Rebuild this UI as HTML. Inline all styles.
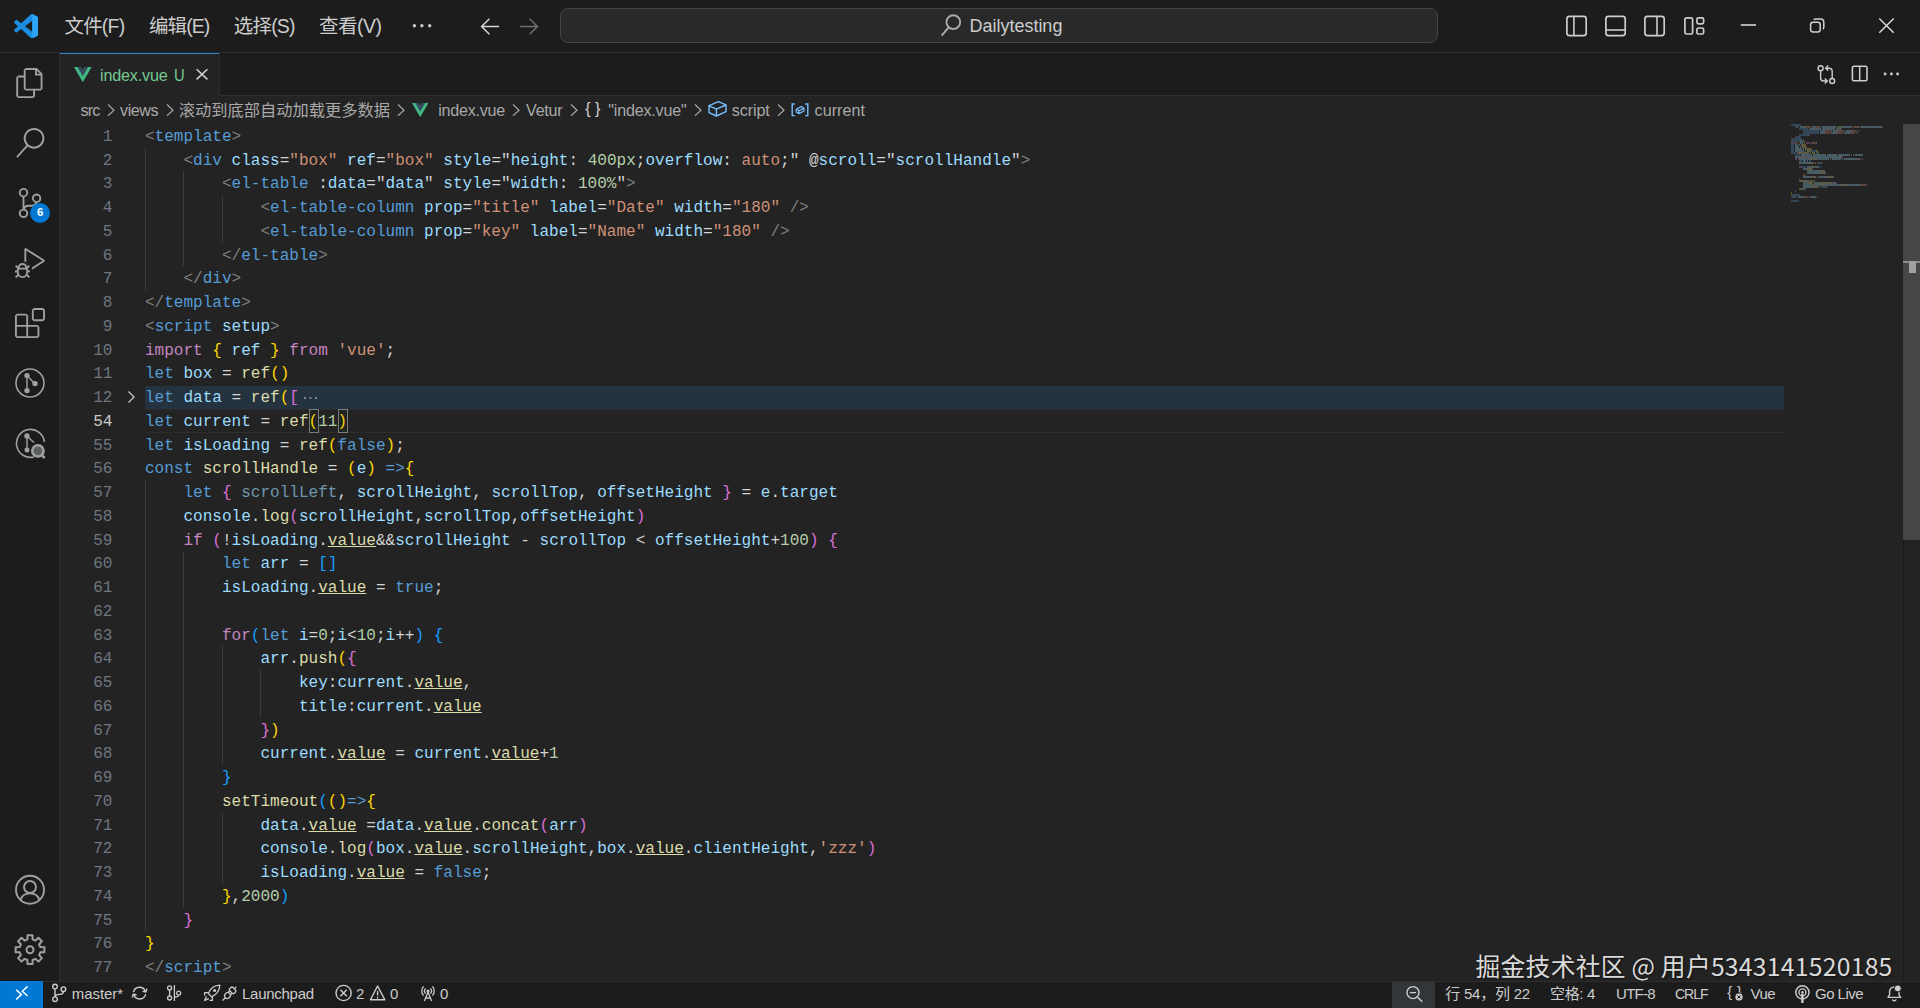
<!DOCTYPE html>
<html lang="zh-CN">
<head>
<meta charset="utf-8">
<title>index.vue - Dailytesting - Visual Studio Code</title>
<style>
html,body{margin:0;padding:0;}
body{width:1920px;height:1008px;overflow:hidden;background:#232323;position:relative;
 font-family:"Liberation Sans","Noto Sans CJK SC",sans-serif;color:#cccccc;}
div,span,svg{box-sizing:border-box;}
.abs{position:absolute;}
.fit{position:absolute;white-space:nowrap;display:inline-block;}
/* title bar */
#title{position:absolute;left:0;top:0;width:1920px;height:53px;background:#1c1c1c;border-bottom:1px solid #2e2e2e;}
#title .m{font-size:19.5px;line-height:24px;top:14px;color:#cccccc;}
#cc{position:absolute;left:560px;top:8px;width:878px;height:35px;border:1px solid #454545;border-radius:8px;background:#292929;}
/* activity bar */
#act{position:absolute;left:0;top:53px;width:60px;height:928px;background:#1c1c1c;border-right:1px solid #2e2e2e;}
/* tabs */
#tabs{position:absolute;left:60px;top:53px;width:1860px;height:43px;background:#1c1c1c;border-bottom:1px solid #2e2e2e;}
#tab{position:absolute;left:0;top:0;width:160px;height:43px;background:#232323;border-right:1px solid #2e2e2e;}
#tab:before{content:"";position:absolute;left:0;top:-1px;width:159px;height:2px;background:linear-gradient(#10304c 0,#10304c 50%,#3f7db3 50%,#3f7db3 100%);}
/* breadcrumbs */
#bc{position:absolute;left:60px;top:96px;width:1860px;height:27px;background:#232323;}
#bc .fit{font-size:16.1px;line-height:20px;top:3.6px;color:#a9a9a9;}
/* editor */
#ed{position:absolute;left:0;top:0;width:1920px;height:981px;overflow:hidden;pointer-events:none;}
.ln{position:absolute;left:60px;width:52.4px;text-align:right;font-family:"Liberation Mono",monospace;font-size:16.04px;line-height:23.75px;height:23.75px;color:#6e7681;white-space:pre;}
.ln.cur{color:#cccccc;}
.cl{position:absolute;left:145px;font-family:"Liberation Mono",monospace;font-size:16.04px;line-height:23.75px;height:23.75px;color:#d4d4d4;white-space:pre;}
.p{color:#808080}.t{color:#569cd6}.a{color:#9cdcfe}.s{color:#ce9178}.n{color:#b5cea8}
.k{color:#569cd6}.c{color:#c586c0}.f{color:#dcdcaa}.v{color:#9cdcfe}
.b1{color:#ffd700}.b2{color:#da70d6}.b3{color:#179fff}
.u{color:#dcdcaa;text-decoration:underline;text-underline-offset:0.8px;text-decoration-thickness:1.2px}
.dim{opacity:.62}
.fold{color:#8a8a8a;margin-left:6px;font-size:13px}
.bm{position:relative;display:inline-block;height:23.75px}
.bm:after{content:"";box-sizing:border-box;position:absolute;left:0.4px;right:-0.8px;top:-1.9px;height:23.75px;border:1px solid #7c7c7c;background:rgba(0,100,1,0.04)}
.guide{position:absolute;width:1px;background:#3a3a3a;}
.foldbg{position:absolute;left:145px;width:1639px;height:23.6px;background:#25323f;}
.folddots{position:absolute;width:1.8px;height:1.8px;background:#7d8791;box-shadow:5.5px 0 #7d8791,11px 0 #7d8791;}
.curline{position:absolute;left:145px;width:1639px;height:23.75px;border-top:1.5px solid #2d2d2d;border-bottom:1.5px solid #2d2d2d;}
.chev{position:absolute;left:123px;}
/* scrollbar */
#sb{position:absolute;left:1903px;top:124px;width:17px;height:857px;border-left:1.5px solid #191919;}
#sl{position:absolute;left:1903px;top:124px;width:17px;height:416px;background:#464646;}
/* status bar */
#st{position:absolute;left:0;top:981px;width:1920px;height:27px;background:#1c1c1c;border-top:1px solid #2e2e2e;}
#st .fit{font-size:15px;line-height:18px;top:2.5px;color:#cccccc;}
#wm{position:absolute;top:947px;font-family:"Noto Sans CJK SC","Liberation Sans",sans-serif;font-size:24.8px;line-height:36px;color:#dadada;white-space:nowrap;text-shadow:1px 1px 2px rgba(0,0,0,.6);}
</style>
</head>
<body>
<!-- TITLE BAR -->
<div id="title">
<span class="fit m" style="letter-spacing:-0.761px;left:64.4px">文件(F)</span>
<span class="fit m" style="letter-spacing:-0.920px;left:149px">编辑(E)</span>
<span class="fit m" style="letter-spacing:-0.820px;left:233.8px">选择(S)</span>
<span class="fit m" style="letter-spacing:-0.500px;left:319px">查看(V)</span>
<div id="cc"></div>
<span class="fit" style="letter-spacing:-0.004px;left:969.4px;top:14.8px;font-size:18px;line-height:22px;color:#cccccc">Dailytesting</span>
</div>

<!-- ACTIVITY BAR -->
<div id="act">
</div>

<!-- TABS -->
<div id="tabs">
<div id="tab"></div>
<span class="fit" style="letter-spacing:-0.200px;left:40px;top:12px;font-size:16.2px;line-height:20px;color:#73c991">index.vue</span>
<span class="fit" style="left:113.6px;top:12px;font-size:16.4px;line-height:20px;color:#73c991;transform:scaleX(.9);transform-origin:left center">U</span>
</div>

<!-- BREADCRUMBS -->
<div id="bc">
<span class="fit" style="letter-spacing:-0.818px;left:20.5px">src</span>
<span class="fit" style="letter-spacing:-0.410px;left:60px">views</span>
<span class="fit" style="letter-spacing:-0.004px;left:118.8px;font-size:16.25px">滚动到底部自动加载更多数据</span>
<span class="fit" style="letter-spacing:-0.234px;left:378.2px">index.vue</span>
<span class="fit" style="letter-spacing:-0.216px;left:466px">Vetur</span>
<span class="fit" style="letter-spacing:-0.193px;left:548.3px">"index.vue"</span>
<span class="fit" style="letter-spacing:-0.059px;left:671.7px">script</span>
<span class="fit" style="letter-spacing:0.044px;left:754.6px">current</span>
</div>

<!-- EDITOR -->
<div id="ed">
<div class="guide" style="left:145.00px;top:147.50px;height:142.50px"></div>
<div class="guide" style="left:183.00px;top:171.25px;height:95.00px"></div>
<div class="guide" style="left:222.00px;top:195.00px;height:47.50px"></div>
<div class="guide" style="left:145.00px;top:480.00px;height:451.25px"></div>
<div class="guide" style="left:183.00px;top:551.25px;height:356.25px"></div>
<div class="guide" style="left:222.00px;top:646.25px;height:118.75px"></div>
<div class="guide" style="left:260.00px;top:670.00px;height:47.50px"></div>
<div class="guide" style="left:222.00px;top:812.50px;height:71.25px"></div>
<div class="ln" style="top:125.90px">1</div><div class="cl" style="top:125.90px"><span class="p">&lt;</span><span class="t">template</span><span class="p">&gt;</span></div>
<div class="ln" style="top:149.65px">2</div><div class="cl" style="top:149.65px">    <span class="p">&lt;</span><span class="t">div</span> <span class="a">class</span>=<span class="s">"box"</span> <span class="a">ref</span>=<span class="s">"box"</span> <span class="a">style</span>="<span class="a">height</span>: <span class="n">400px</span>;<span class="a">overflow</span>: <span class="s">auto</span>;" @<span class="a">scroll</span>="<span class="a">scrollHandle</span>"<span class="p">&gt;</span></div>
<div class="ln" style="top:173.40px">3</div><div class="cl" style="top:173.40px">        <span class="p">&lt;</span><span class="t">el-table</span> :<span class="a">data</span>="<span class="a">data</span>" <span class="a">style</span>="<span class="a">width</span>: <span class="n">100%</span>"<span class="p">&gt;</span></div>
<div class="ln" style="top:197.15px">4</div><div class="cl" style="top:197.15px">            <span class="p">&lt;</span><span class="t">el-table-column</span> <span class="a">prop</span>=<span class="s">"title"</span> <span class="a">label</span>=<span class="s">"Date"</span> <span class="a">width</span>=<span class="s">"180"</span> <span class="p">/&gt;</span></div>
<div class="ln" style="top:220.90px">5</div><div class="cl" style="top:220.90px">            <span class="p">&lt;</span><span class="t">el-table-column</span> <span class="a">prop</span>=<span class="s">"key"</span> <span class="a">label</span>=<span class="s">"Name"</span> <span class="a">width</span>=<span class="s">"180"</span> <span class="p">/&gt;</span></div>
<div class="ln" style="top:244.65px">6</div><div class="cl" style="top:244.65px">        <span class="p">&lt;/</span><span class="t">el-table</span><span class="p">&gt;</span></div>
<div class="ln" style="top:268.40px">7</div><div class="cl" style="top:268.40px">    <span class="p">&lt;/</span><span class="t">div</span><span class="p">&gt;</span></div>
<div class="ln" style="top:292.15px">8</div><div class="cl" style="top:292.15px"><span class="p">&lt;/</span><span class="t">template</span><span class="p">&gt;</span></div>
<div class="ln" style="top:315.90px">9</div><div class="cl" style="top:315.90px"><span class="p">&lt;</span><span class="t">script</span> <span class="a">setup</span><span class="p">&gt;</span></div>
<div class="ln" style="top:339.65px">10</div><div class="cl" style="top:339.65px"><span class="c">import</span> <span class="b1">{</span> <span class="v">ref</span> <span class="b1">}</span> <span class="c">from</span> <span class="s">'vue'</span>;</div>
<div class="ln" style="top:363.40px">11</div><div class="cl" style="top:363.40px"><span class="k">let</span> <span class="v">box</span> = <span class="f">ref</span><span class="b1">()</span></div>
<div class="foldbg" style="top:386.20px"></div><div class="folddots" style="left:304.2px;top:397.20px"></div><svg class="chev" style="top:389.20px" width="16" height="16" viewBox="0 0 16 16"><path d="M5.5 2.5 L11 8 L5.5 13.5" fill="none" stroke="#c5c5c5" stroke-width="1.3"/></svg><div class="ln" style="top:387.15px">12</div><div class="cl" style="top:387.15px"><span class="k">let</span> <span class="v">data</span> = <span class="f">ref</span><span class="b1">(</span><span class="b2">[</span></div>
<div class="curline" style="top:408.75px"></div><div class="ln cur" style="top:410.90px">54</div><div class="cl" style="top:410.90px"><span class="k">let</span> <span class="v">current</span> = <span class="f">ref</span><span class="b1 bm">(</span><span class="n">11</span><span class="b1 bm">)</span></div>
<div class="ln" style="top:434.65px">55</div><div class="cl" style="top:434.65px"><span class="k">let</span> <span class="v">isLoading</span> = <span class="f">ref</span><span class="b1">(</span><span class="k">false</span><span class="b1">)</span>;</div>
<div class="ln" style="top:458.40px">56</div><div class="cl" style="top:458.40px"><span class="k">const</span> <span class="f">scrollHandle</span> = <span class="b1">(</span><span class="v">e</span><span class="b1">)</span> <span class="k">=&gt;</span><span class="b1">{</span></div>
<div class="ln" style="top:482.15px">57</div><div class="cl" style="top:482.15px">    <span class="k">let</span> <span class="b2">{</span> <span class="v dim">scrollLeft</span>, <span class="v">scrollHeight</span>, <span class="v">scrollTop</span>, <span class="v">offsetHeight</span> <span class="b2">}</span> = <span class="v">e</span>.<span class="v">target</span></div>
<div class="ln" style="top:505.90px">58</div><div class="cl" style="top:505.90px">    <span class="v">console</span>.<span class="f">log</span><span class="b2">(</span><span class="v">scrollHeight</span>,<span class="v">scrollTop</span>,<span class="v">offsetHeight</span><span class="b2">)</span></div>
<div class="ln" style="top:529.65px">59</div><div class="cl" style="top:529.65px">    <span class="c">if</span> <span class="b2">(</span>!<span class="v">isLoading</span>.<span class="u">value</span>&amp;&amp;<span class="v">scrollHeight</span> - <span class="v">scrollTop</span> &lt; <span class="v">offsetHeight</span>+<span class="n">100</span><span class="b2">)</span> <span class="b2">{</span></div>
<div class="ln" style="top:553.40px">60</div><div class="cl" style="top:553.40px">        <span class="k">let</span> <span class="v">arr</span> = <span class="b3">[]</span></div>
<div class="ln" style="top:577.15px">61</div><div class="cl" style="top:577.15px">        <span class="v">isLoading</span>.<span class="u">value</span> = <span class="k">true</span>;</div>
<div class="ln" style="top:600.90px">62</div><div class="cl" style="top:600.90px"></div>
<div class="ln" style="top:624.65px">63</div><div class="cl" style="top:624.65px">        <span class="c">for</span><span class="b3">(</span><span class="k">let</span> <span class="v">i</span>=<span class="n">0</span>;<span class="v">i</span>&lt;<span class="n">10</span>;<span class="v">i</span>++<span class="b3">)</span> <span class="b3">{</span></div>
<div class="ln" style="top:648.40px">64</div><div class="cl" style="top:648.40px">            <span class="v">arr</span>.<span class="f">push</span><span class="b1">(</span><span class="b2">{</span></div>
<div class="ln" style="top:672.15px">65</div><div class="cl" style="top:672.15px">                <span class="v">key</span>:<span class="v">current</span>.<span class="u">value</span>,</div>
<div class="ln" style="top:695.90px">66</div><div class="cl" style="top:695.90px">                <span class="v">title</span>:<span class="v">current</span>.<span class="u">value</span></div>
<div class="ln" style="top:719.65px">67</div><div class="cl" style="top:719.65px">            <span class="b2">}</span><span class="b1">)</span></div>
<div class="ln" style="top:743.40px">68</div><div class="cl" style="top:743.40px">            <span class="v">current</span>.<span class="u">value</span> = <span class="v">current</span>.<span class="u">value</span>+<span class="n">1</span></div>
<div class="ln" style="top:767.15px">69</div><div class="cl" style="top:767.15px">        <span class="b3">}</span></div>
<div class="ln" style="top:790.90px">70</div><div class="cl" style="top:790.90px">        <span class="f">setTimeout</span><span class="b3">(</span><span class="b1">()</span><span class="k">=&gt;</span><span class="b1">{</span></div>
<div class="ln" style="top:814.65px">71</div><div class="cl" style="top:814.65px">            <span class="v">data</span>.<span class="u">value</span> =<span class="v">data</span>.<span class="u">value</span>.<span class="f">concat</span><span class="b2">(</span><span class="v">arr</span><span class="b2">)</span></div>
<div class="ln" style="top:838.40px">72</div><div class="cl" style="top:838.40px">            <span class="v">console</span>.<span class="f">log</span><span class="b2">(</span><span class="v">box</span>.<span class="u">value</span>.<span class="v">scrollHeight</span>,<span class="v">box</span>.<span class="u">value</span>.<span class="v">clientHeight</span>,<span class="s">'zzz'</span><span class="b2">)</span></div>
<div class="ln" style="top:862.15px">73</div><div class="cl" style="top:862.15px">            <span class="v">isLoading</span>.<span class="u">value</span> = <span class="k">false</span>;</div>
<div class="ln" style="top:885.90px">74</div><div class="cl" style="top:885.90px">        <span class="b1">}</span>,<span class="n">2000</span><span class="b3">)</span></div>
<div class="ln" style="top:909.65px">75</div><div class="cl" style="top:909.65px">    <span class="b2">}</span></div>
<div class="ln" style="top:933.40px">76</div><div class="cl" style="top:933.40px"><span class="b1">}</span></div>
<div class="ln" style="top:957.15px">77</div><div class="cl" style="top:957.15px"><span class="p">&lt;/</span><span class="t">script</span><span class="p">&gt;</span></div>
<svg class="abs" style="left:1791px;top:124px;opacity:.3" width="100" height="80" viewBox="0 0 100 80" shape-rendering="crispEdges"><rect x="0" y="0" width="1" height="2" fill="#808080"/><rect x="1" y="0" width="8" height="2" fill="#569cd6"/><rect x="9" y="0" width="1" height="2" fill="#808080"/><rect x="4" y="2" width="1" height="2" fill="#808080"/><rect x="5" y="2" width="3" height="2" fill="#569cd6"/><rect x="9" y="2" width="5" height="2" fill="#9cdcfe"/><rect x="14" y="2" width="1" height="2" fill="#d4d4d4"/><rect x="15" y="2" width="5" height="2" fill="#ce9178"/><rect x="21" y="2" width="3" height="2" fill="#9cdcfe"/><rect x="24" y="2" width="1" height="2" fill="#d4d4d4"/><rect x="25" y="2" width="5" height="2" fill="#ce9178"/><rect x="31" y="2" width="5" height="2" fill="#9cdcfe"/><rect x="36" y="2" width="2" height="2" fill="#d4d4d4"/><rect x="38" y="2" width="6" height="2" fill="#9cdcfe"/><rect x="44" y="2" width="1" height="2" fill="#d4d4d4"/><rect x="46" y="2" width="5" height="2" fill="#b5cea8"/><rect x="51" y="2" width="1" height="2" fill="#d4d4d4"/><rect x="52" y="2" width="8" height="2" fill="#9cdcfe"/><rect x="60" y="2" width="1" height="2" fill="#d4d4d4"/><rect x="62" y="2" width="4" height="2" fill="#ce9178"/><rect x="66" y="2" width="2" height="2" fill="#d4d4d4"/><rect x="69" y="2" width="1" height="2" fill="#d4d4d4"/><rect x="70" y="2" width="6" height="2" fill="#9cdcfe"/><rect x="76" y="2" width="2" height="2" fill="#d4d4d4"/><rect x="78" y="2" width="12" height="2" fill="#9cdcfe"/><rect x="90" y="2" width="1" height="2" fill="#d4d4d4"/><rect x="91" y="2" width="1" height="2" fill="#808080"/><rect x="8" y="4" width="1" height="2" fill="#808080"/><rect x="9" y="4" width="8" height="2" fill="#569cd6"/><rect x="18" y="4" width="1" height="2" fill="#d4d4d4"/><rect x="19" y="4" width="4" height="2" fill="#9cdcfe"/><rect x="23" y="4" width="2" height="2" fill="#d4d4d4"/><rect x="25" y="4" width="4" height="2" fill="#9cdcfe"/><rect x="29" y="4" width="1" height="2" fill="#d4d4d4"/><rect x="31" y="4" width="5" height="2" fill="#9cdcfe"/><rect x="36" y="4" width="2" height="2" fill="#d4d4d4"/><rect x="38" y="4" width="5" height="2" fill="#9cdcfe"/><rect x="43" y="4" width="1" height="2" fill="#d4d4d4"/><rect x="45" y="4" width="4" height="2" fill="#b5cea8"/><rect x="49" y="4" width="1" height="2" fill="#d4d4d4"/><rect x="50" y="4" width="1" height="2" fill="#808080"/><rect x="12" y="6" width="1" height="2" fill="#808080"/><rect x="13" y="6" width="15" height="2" fill="#569cd6"/><rect x="29" y="6" width="4" height="2" fill="#9cdcfe"/><rect x="33" y="6" width="1" height="2" fill="#d4d4d4"/><rect x="34" y="6" width="7" height="2" fill="#ce9178"/><rect x="42" y="6" width="5" height="2" fill="#9cdcfe"/><rect x="47" y="6" width="1" height="2" fill="#d4d4d4"/><rect x="48" y="6" width="6" height="2" fill="#ce9178"/><rect x="55" y="6" width="5" height="2" fill="#9cdcfe"/><rect x="60" y="6" width="1" height="2" fill="#d4d4d4"/><rect x="61" y="6" width="5" height="2" fill="#ce9178"/><rect x="67" y="6" width="2" height="2" fill="#808080"/><rect x="12" y="8" width="1" height="2" fill="#808080"/><rect x="13" y="8" width="15" height="2" fill="#569cd6"/><rect x="29" y="8" width="4" height="2" fill="#9cdcfe"/><rect x="33" y="8" width="1" height="2" fill="#d4d4d4"/><rect x="34" y="8" width="5" height="2" fill="#ce9178"/><rect x="40" y="8" width="5" height="2" fill="#9cdcfe"/><rect x="45" y="8" width="1" height="2" fill="#d4d4d4"/><rect x="46" y="8" width="6" height="2" fill="#ce9178"/><rect x="53" y="8" width="5" height="2" fill="#9cdcfe"/><rect x="58" y="8" width="1" height="2" fill="#d4d4d4"/><rect x="59" y="8" width="5" height="2" fill="#ce9178"/><rect x="65" y="8" width="2" height="2" fill="#808080"/><rect x="8" y="10" width="2" height="2" fill="#808080"/><rect x="10" y="10" width="8" height="2" fill="#569cd6"/><rect x="18" y="10" width="1" height="2" fill="#808080"/><rect x="4" y="12" width="2" height="2" fill="#808080"/><rect x="6" y="12" width="3" height="2" fill="#569cd6"/><rect x="9" y="12" width="1" height="2" fill="#808080"/><rect x="0" y="14" width="2" height="2" fill="#808080"/><rect x="2" y="14" width="8" height="2" fill="#569cd6"/><rect x="10" y="14" width="1" height="2" fill="#808080"/><rect x="0" y="16" width="1" height="2" fill="#808080"/><rect x="1" y="16" width="6" height="2" fill="#569cd6"/><rect x="8" y="16" width="5" height="2" fill="#9cdcfe"/><rect x="13" y="16" width="1" height="2" fill="#808080"/><rect x="0" y="18" width="6" height="2" fill="#c586c0"/><rect x="7" y="18" width="1" height="2" fill="#ffd700"/><rect x="9" y="18" width="3" height="2" fill="#9cdcfe"/><rect x="13" y="18" width="1" height="2" fill="#ffd700"/><rect x="15" y="18" width="4" height="2" fill="#c586c0"/><rect x="20" y="18" width="5" height="2" fill="#ce9178"/><rect x="25" y="18" width="1" height="2" fill="#d4d4d4"/><rect x="0" y="20" width="3" height="2" fill="#569cd6"/><rect x="4" y="20" width="3" height="2" fill="#9cdcfe"/><rect x="8" y="20" width="1" height="2" fill="#d4d4d4"/><rect x="10" y="20" width="3" height="2" fill="#dcdcaa"/><rect x="13" y="20" width="2" height="2" fill="#ffd700"/><rect x="0" y="22" width="3" height="2" fill="#569cd6"/><rect x="4" y="22" width="4" height="2" fill="#9cdcfe"/><rect x="9" y="22" width="1" height="2" fill="#d4d4d4"/><rect x="11" y="22" width="3" height="2" fill="#dcdcaa"/><rect x="14" y="22" width="1" height="2" fill="#ffd700"/><rect x="15" y="22" width="1" height="2" fill="#da70d6"/><rect x="0" y="24" width="3" height="2" fill="#569cd6"/><rect x="4" y="24" width="7" height="2" fill="#9cdcfe"/><rect x="12" y="24" width="1" height="2" fill="#d4d4d4"/><rect x="14" y="24" width="3" height="2" fill="#dcdcaa"/><rect x="17" y="24" width="1" height="2" fill="#ffd700"/><rect x="18" y="24" width="2" height="2" fill="#b5cea8"/><rect x="20" y="24" width="1" height="2" fill="#ffd700"/><rect x="0" y="26" width="3" height="2" fill="#569cd6"/><rect x="4" y="26" width="9" height="2" fill="#9cdcfe"/><rect x="14" y="26" width="1" height="2" fill="#d4d4d4"/><rect x="16" y="26" width="3" height="2" fill="#dcdcaa"/><rect x="19" y="26" width="1" height="2" fill="#ffd700"/><rect x="20" y="26" width="5" height="2" fill="#569cd6"/><rect x="25" y="26" width="1" height="2" fill="#ffd700"/><rect x="26" y="26" width="1" height="2" fill="#d4d4d4"/><rect x="0" y="28" width="5" height="2" fill="#569cd6"/><rect x="6" y="28" width="12" height="2" fill="#dcdcaa"/><rect x="19" y="28" width="1" height="2" fill="#d4d4d4"/><rect x="21" y="28" width="1" height="2" fill="#ffd700"/><rect x="22" y="28" width="1" height="2" fill="#9cdcfe"/><rect x="23" y="28" width="1" height="2" fill="#ffd700"/><rect x="25" y="28" width="2" height="2" fill="#569cd6"/><rect x="27" y="28" width="1" height="2" fill="#ffd700"/><rect x="4" y="30" width="3" height="2" fill="#569cd6"/><rect x="8" y="30" width="1" height="2" fill="#da70d6"/><rect x="10" y="30" width="10" height="2" fill="#9cdcfe"/><rect x="20" y="30" width="1" height="2" fill="#d4d4d4"/><rect x="22" y="30" width="12" height="2" fill="#9cdcfe"/><rect x="34" y="30" width="1" height="2" fill="#d4d4d4"/><rect x="36" y="30" width="9" height="2" fill="#9cdcfe"/><rect x="45" y="30" width="1" height="2" fill="#d4d4d4"/><rect x="47" y="30" width="12" height="2" fill="#9cdcfe"/><rect x="60" y="30" width="1" height="2" fill="#da70d6"/><rect x="62" y="30" width="1" height="2" fill="#d4d4d4"/><rect x="64" y="30" width="1" height="2" fill="#9cdcfe"/><rect x="65" y="30" width="1" height="2" fill="#d4d4d4"/><rect x="66" y="30" width="6" height="2" fill="#9cdcfe"/><rect x="4" y="32" width="7" height="2" fill="#9cdcfe"/><rect x="11" y="32" width="1" height="2" fill="#d4d4d4"/><rect x="12" y="32" width="3" height="2" fill="#dcdcaa"/><rect x="15" y="32" width="1" height="2" fill="#da70d6"/><rect x="16" y="32" width="12" height="2" fill="#9cdcfe"/><rect x="28" y="32" width="1" height="2" fill="#d4d4d4"/><rect x="29" y="32" width="9" height="2" fill="#9cdcfe"/><rect x="38" y="32" width="1" height="2" fill="#d4d4d4"/><rect x="39" y="32" width="12" height="2" fill="#9cdcfe"/><rect x="51" y="32" width="1" height="2" fill="#da70d6"/><rect x="4" y="34" width="2" height="2" fill="#c586c0"/><rect x="7" y="34" width="1" height="2" fill="#da70d6"/><rect x="8" y="34" width="1" height="2" fill="#d4d4d4"/><rect x="9" y="34" width="9" height="2" fill="#9cdcfe"/><rect x="18" y="34" width="1" height="2" fill="#d4d4d4"/><rect x="19" y="34" width="5" height="2" fill="#dcdcaa"/><rect x="24" y="34" width="2" height="2" fill="#d4d4d4"/><rect x="26" y="34" width="12" height="2" fill="#9cdcfe"/><rect x="39" y="34" width="1" height="2" fill="#d4d4d4"/><rect x="41" y="34" width="9" height="2" fill="#9cdcfe"/><rect x="51" y="34" width="1" height="2" fill="#d4d4d4"/><rect x="53" y="34" width="12" height="2" fill="#9cdcfe"/><rect x="65" y="34" width="1" height="2" fill="#d4d4d4"/><rect x="66" y="34" width="3" height="2" fill="#b5cea8"/><rect x="69" y="34" width="1" height="2" fill="#da70d6"/><rect x="71" y="34" width="1" height="2" fill="#da70d6"/><rect x="8" y="36" width="3" height="2" fill="#569cd6"/><rect x="12" y="36" width="3" height="2" fill="#9cdcfe"/><rect x="16" y="36" width="1" height="2" fill="#d4d4d4"/><rect x="18" y="36" width="2" height="2" fill="#179fff"/><rect x="8" y="38" width="9" height="2" fill="#9cdcfe"/><rect x="17" y="38" width="1" height="2" fill="#d4d4d4"/><rect x="18" y="38" width="5" height="2" fill="#dcdcaa"/><rect x="24" y="38" width="1" height="2" fill="#d4d4d4"/><rect x="26" y="38" width="4" height="2" fill="#569cd6"/><rect x="30" y="38" width="1" height="2" fill="#d4d4d4"/><rect x="8" y="42" width="3" height="2" fill="#c586c0"/><rect x="11" y="42" width="1" height="2" fill="#179fff"/><rect x="12" y="42" width="3" height="2" fill="#569cd6"/><rect x="16" y="42" width="1" height="2" fill="#9cdcfe"/><rect x="17" y="42" width="1" height="2" fill="#d4d4d4"/><rect x="18" y="42" width="1" height="2" fill="#b5cea8"/><rect x="19" y="42" width="1" height="2" fill="#d4d4d4"/><rect x="20" y="42" width="1" height="2" fill="#9cdcfe"/><rect x="21" y="42" width="1" height="2" fill="#d4d4d4"/><rect x="22" y="42" width="2" height="2" fill="#b5cea8"/><rect x="24" y="42" width="1" height="2" fill="#d4d4d4"/><rect x="25" y="42" width="1" height="2" fill="#9cdcfe"/><rect x="26" y="42" width="2" height="2" fill="#d4d4d4"/><rect x="28" y="42" width="1" height="2" fill="#179fff"/><rect x="30" y="42" width="1" height="2" fill="#179fff"/><rect x="12" y="44" width="3" height="2" fill="#9cdcfe"/><rect x="15" y="44" width="1" height="2" fill="#d4d4d4"/><rect x="16" y="44" width="4" height="2" fill="#dcdcaa"/><rect x="20" y="44" width="1" height="2" fill="#ffd700"/><rect x="21" y="44" width="1" height="2" fill="#da70d6"/><rect x="16" y="46" width="3" height="2" fill="#9cdcfe"/><rect x="19" y="46" width="1" height="2" fill="#d4d4d4"/><rect x="20" y="46" width="7" height="2" fill="#9cdcfe"/><rect x="27" y="46" width="1" height="2" fill="#d4d4d4"/><rect x="28" y="46" width="5" height="2" fill="#dcdcaa"/><rect x="33" y="46" width="1" height="2" fill="#d4d4d4"/><rect x="16" y="48" width="5" height="2" fill="#9cdcfe"/><rect x="21" y="48" width="1" height="2" fill="#d4d4d4"/><rect x="22" y="48" width="7" height="2" fill="#9cdcfe"/><rect x="29" y="48" width="1" height="2" fill="#d4d4d4"/><rect x="30" y="48" width="5" height="2" fill="#dcdcaa"/><rect x="12" y="50" width="1" height="2" fill="#da70d6"/><rect x="13" y="50" width="1" height="2" fill="#ffd700"/><rect x="12" y="52" width="7" height="2" fill="#9cdcfe"/><rect x="19" y="52" width="1" height="2" fill="#d4d4d4"/><rect x="20" y="52" width="5" height="2" fill="#dcdcaa"/><rect x="26" y="52" width="1" height="2" fill="#d4d4d4"/><rect x="28" y="52" width="7" height="2" fill="#9cdcfe"/><rect x="35" y="52" width="1" height="2" fill="#d4d4d4"/><rect x="36" y="52" width="5" height="2" fill="#dcdcaa"/><rect x="41" y="52" width="1" height="2" fill="#d4d4d4"/><rect x="42" y="52" width="1" height="2" fill="#b5cea8"/><rect x="8" y="54" width="1" height="2" fill="#179fff"/><rect x="8" y="56" width="10" height="2" fill="#dcdcaa"/><rect x="18" y="56" width="1" height="2" fill="#179fff"/><rect x="19" y="56" width="2" height="2" fill="#ffd700"/><rect x="21" y="56" width="2" height="2" fill="#569cd6"/><rect x="23" y="56" width="1" height="2" fill="#ffd700"/><rect x="12" y="58" width="4" height="2" fill="#9cdcfe"/><rect x="16" y="58" width="1" height="2" fill="#d4d4d4"/><rect x="17" y="58" width="5" height="2" fill="#dcdcaa"/><rect x="23" y="58" width="1" height="2" fill="#d4d4d4"/><rect x="24" y="58" width="4" height="2" fill="#9cdcfe"/><rect x="28" y="58" width="1" height="2" fill="#d4d4d4"/><rect x="29" y="58" width="5" height="2" fill="#dcdcaa"/><rect x="34" y="58" width="1" height="2" fill="#d4d4d4"/><rect x="35" y="58" width="6" height="2" fill="#dcdcaa"/><rect x="41" y="58" width="1" height="2" fill="#da70d6"/><rect x="42" y="58" width="3" height="2" fill="#9cdcfe"/><rect x="45" y="58" width="1" height="2" fill="#da70d6"/><rect x="12" y="60" width="7" height="2" fill="#9cdcfe"/><rect x="19" y="60" width="1" height="2" fill="#d4d4d4"/><rect x="20" y="60" width="3" height="2" fill="#dcdcaa"/><rect x="23" y="60" width="1" height="2" fill="#da70d6"/><rect x="24" y="60" width="3" height="2" fill="#9cdcfe"/><rect x="27" y="60" width="1" height="2" fill="#d4d4d4"/><rect x="28" y="60" width="5" height="2" fill="#dcdcaa"/><rect x="33" y="60" width="1" height="2" fill="#d4d4d4"/><rect x="34" y="60" width="12" height="2" fill="#9cdcfe"/><rect x="46" y="60" width="1" height="2" fill="#d4d4d4"/><rect x="47" y="60" width="3" height="2" fill="#9cdcfe"/><rect x="50" y="60" width="1" height="2" fill="#d4d4d4"/><rect x="51" y="60" width="5" height="2" fill="#dcdcaa"/><rect x="56" y="60" width="1" height="2" fill="#d4d4d4"/><rect x="57" y="60" width="12" height="2" fill="#9cdcfe"/><rect x="69" y="60" width="1" height="2" fill="#d4d4d4"/><rect x="70" y="60" width="5" height="2" fill="#ce9178"/><rect x="75" y="60" width="1" height="2" fill="#da70d6"/><rect x="12" y="62" width="9" height="2" fill="#9cdcfe"/><rect x="21" y="62" width="1" height="2" fill="#d4d4d4"/><rect x="22" y="62" width="5" height="2" fill="#dcdcaa"/><rect x="28" y="62" width="1" height="2" fill="#d4d4d4"/><rect x="30" y="62" width="5" height="2" fill="#569cd6"/><rect x="35" y="62" width="1" height="2" fill="#d4d4d4"/><rect x="8" y="64" width="1" height="2" fill="#ffd700"/><rect x="9" y="64" width="1" height="2" fill="#d4d4d4"/><rect x="10" y="64" width="4" height="2" fill="#b5cea8"/><rect x="14" y="64" width="1" height="2" fill="#179fff"/><rect x="4" y="66" width="1" height="2" fill="#da70d6"/><rect x="0" y="68" width="1" height="2" fill="#ffd700"/><rect x="0" y="70" width="2" height="2" fill="#808080"/><rect x="2" y="70" width="6" height="2" fill="#569cd6"/><rect x="8" y="70" width="1" height="2" fill="#808080"/><rect x="0" y="72" width="1" height="2" fill="#808080"/><rect x="1" y="72" width="5" height="2" fill="#569cd6"/><rect x="7" y="72" width="4" height="2" fill="#9cdcfe"/><rect x="11" y="72" width="1" height="2" fill="#d4d4d4"/><rect x="12" y="72" width="6" height="2" fill="#ce9178"/><rect x="19" y="72" width="6" height="2" fill="#9cdcfe"/><rect x="25" y="72" width="1" height="2" fill="#808080"/><rect x="0" y="76" width="2" height="2" fill="#808080"/><rect x="2" y="76" width="5" height="2" fill="#569cd6"/><rect x="7" y="76" width="1" height="2" fill="#808080"/></svg>
</div>
<div id="sb"></div>
<div id="sl"></div>
<div class="abs" style="left:1903px;top:261px;width:17px;height:2px;background:#8a8a8a"></div>
<div class="abs" style="left:1909px;top:261px;width:7px;height:12px;background:#a0a0a0"></div>

<div id="wm" style="letter-spacing:0.214px;left:1475.6px">掘金技术社区 @ 用户5343141520185</div>

<!-- STATUS BAR -->
<div id="st">
<div class="abs" style="left:0;top:-1px;width:43px;height:28px;background:#0078d4"></div>
<span class="fit" style="letter-spacing:-0.070px;left:71.8px">master*</span>
<span class="fit" style="letter-spacing:-0.272px;left:242px">Launchpad</span>
<span class="fit" style="letter-spacing:-1.344px;left:356px">2</span>
<span class="fit" style="letter-spacing:-0.844px;left:390px">0</span>
<span class="fit" style="letter-spacing:-0.844px;left:440px">0</span>
<div class="abs" style="left:1392px;top:0;width:43px;height:27px;background:#333638"></div>
<span class="fit" style="letter-spacing:-0.213px;left:1445.2px">行 54，列 22</span>
<span class="fit" style="letter-spacing:-0.338px;left:1550px">空格: 4</span>
<span class="fit" style="letter-spacing:-0.700px;left:1616px">UTF-8</span>
<span class="fit" style="letter-spacing:-0.991px;left:1675px;font-size:14px">CRLF</span>
<span class="fit" style="letter-spacing:-0.580px;left:1750.6px">Vue</span>
<span class="fit" style="letter-spacing:-0.529px;left:1815px">Go Live</span>
</div>
<svg class="abs" style="left:13.70px;top:13.70px" width="24.4" height="24.4" viewBox="0 0 100 100" ><defs><clipPath id="lg"><path d="M70.9119 99.3171C72.4869 99.9307 74.2828 99.8914 75.8725 99.1264L96.4608 89.2197C98.6242 88.1787 100 85.9892 100 83.5872V16.4133C100 14.0113 98.6243 11.8218 96.4609 10.7808L75.8725 0.873756C73.7862 -0.130129 71.3446 0.11576 69.5135 1.44695C69.252 1.63711 69.0028 1.84943 68.769 2.08341L29.3551 38.0415L12.1872 25.0096C10.589 23.7965 8.35363 23.8959 6.86933 25.2461L1.36303 30.2549C-0.452552 31.9064 -0.454633 34.7627 1.35853 36.417L16.2471 50.0001L1.35853 63.5832C-0.454633 65.2374 -0.452552 68.0938 1.36303 69.7453L6.86933 74.7541C8.35363 76.1043 10.589 76.2037 12.1872 74.9905L29.3551 61.9587L68.769 97.9167C69.3925 98.5406 70.1246 99.0104 70.9119 99.3171ZM75.0152 27.2989L45.1091 50.0001L75.0152 72.7012V27.2989Z"/></clipPath></defs><path d="M70.9119 99.3171C72.4869 99.9307 74.2828 99.8914 75.8725 99.1264L96.4608 89.2197C98.6242 88.1787 100 85.9892 100 83.5872V16.4133C100 14.0113 98.6243 11.8218 96.4609 10.7808L75.8725 0.873756C73.7862 -0.130129 71.3446 0.11576 69.5135 1.44695C69.252 1.63711 69.0028 1.84943 68.769 2.08341L29.3551 38.0415L12.1872 25.0096C10.589 23.7965 8.35363 23.8959 6.86933 25.2461L1.36303 30.2549C-0.452552 31.9064 -0.454633 34.7627 1.35853 36.417L16.2471 50.0001L1.35853 63.5832C-0.454633 65.2374 -0.452552 68.0938 1.36303 69.7453L6.86933 74.7541C8.35363 76.1043 10.589 76.2037 12.1872 74.9905L29.3551 61.9587L68.769 97.9167C69.3925 98.5406 70.1246 99.0104 70.9119 99.3171ZM75.0152 27.2989L45.1091 50.0001L75.0152 72.7012V27.2989Z" fill="#1b8de0" fill-rule="evenodd"/><rect x="75" y="0" width="25" height="100" fill="#2ba6f5" clip-path="url(#lg)"/></svg>
<svg class="abs" style="left:410.00px;top:20.00px" width="26" height="12" viewBox="0 0 26 12" ><circle cx="4.4" cy="5.8" r="1.7" fill="#ccc"/><circle cx="11.9" cy="5.8" r="1.7" fill="#ccc"/><circle cx="19.7" cy="5.8" r="1.7" fill="#ccc"/></svg>
<svg class="abs" style="left:478.00px;top:16.00px" width="24" height="22" viewBox="0 0 24 22" ><path d="M21 10.5H3.6M11.4 2.8L3.6 10.5L11.4 18.2" fill="none" stroke="#d6d6d6" stroke-width="1.5"/></svg>
<svg class="abs" style="left:517.00px;top:16.00px" width="24" height="22" viewBox="0 0 24 22" ><path d="M3 10.5H20.4M12.6 2.8L20.4 10.5L12.6 18.2" fill="none" stroke="#6f6f6f" stroke-width="1.5"/></svg>
<svg class="abs" style="left:938.00px;top:12.00px" width="28" height="28" viewBox="0 0 28 28" ><circle cx="15.3" cy="10.1" r="6.9" fill="none" stroke="#a8a8a8" stroke-width="1.9"/><path d="M10.7 15.4L3.6 23.6" stroke="#a8a8a8" stroke-width="2" fill="none"/></svg>
<svg class="abs" style="left:1564.00px;top:14.00px" width="24" height="24" viewBox="0 0 24 24" ><rect x="2.9" y="2.3" width="19.3" height="19.3" rx="2.6" fill="none" stroke="#cccccc" stroke-width="1.7"/><path d="M9.9 2.3V21.6" stroke="#cccccc" stroke-width="1.6"/></svg>
<svg class="abs" style="left:1603.00px;top:14.00px" width="24" height="24" viewBox="0 0 24 24" ><rect x="2.9" y="2.3" width="19.3" height="19.3" rx="2.6" fill="none" stroke="#cccccc" stroke-width="1.7"/><path d="M2.9 16H22.2" stroke="#cccccc" stroke-width="1.6"/></svg>
<svg class="abs" style="left:1642.10px;top:14.00px" width="24" height="24" viewBox="0 0 24 24" ><rect x="2.9" y="2.3" width="19.3" height="19.3" rx="2.6" fill="none" stroke="#cccccc" stroke-width="1.7"/><path d="M15 2.3V21.6" stroke="#cccccc" stroke-width="1.6"/></svg>
<svg class="abs" style="left:1682.00px;top:14.00px" width="24" height="24" viewBox="0 0 24 24" ><rect x="2.9" y="3.8" width="7.7" height="16.2" rx="1.8" fill="none" stroke="#cccccc" stroke-width="1.7"/><rect x="14.9" y="3.8" width="6.7" height="6" rx="1.6" fill="none" stroke="#cccccc" stroke-width="1.7"/><rect x="14.9" y="14" width="6.7" height="6" rx="1.6" fill="none" stroke="#cccccc" stroke-width="1.7"/></svg>
<svg class="abs" style="left:1738.00px;top:20.00px" width="20" height="10" viewBox="0 0 20 10" ><path d="M2.8 5H18.1" stroke="#d8d8d8" stroke-width="1.6"/></svg>
<svg class="abs" style="left:1806.00px;top:15.00px" width="22" height="22" viewBox="0 0 22 22" ><rect x="4.6" y="7.2" width="9.6" height="9.8" rx="2.4" fill="none" stroke="#d0d0d0" stroke-width="1.5"/><path d="M7.6 4.6Q8.4 3.9 10 3.9H14.6Q17.8 3.9 17.8 7.2V12Q17.8 13.4 17 14.2" fill="none" stroke="#d0d0d0" stroke-width="1.5"/></svg>
<svg class="abs" style="left:1875.00px;top:14.00px" width="24" height="24" viewBox="0 0 24 24" ><path d="M4.3 4.6L18.7 18.8M18.7 4.6L4.3 18.8" stroke="#dcdcdc" stroke-width="1.4" fill="none"/></svg>
<svg class="abs" style="left:15.00px;top:68.00px" width="30" height="30" viewBox="0 0 24 24" ><path d="M17.5 0h-9L7 1.5V6H2.5L1 7.5v15.07L2.5 24h12.07L16 22.57V18h4.7l1.3-1.43V4.5L17.5 0zm0 2.12l2.38 2.38H17.5V2.12zm-3 20.38h-12v-15H7v9.07L8.5 18h6v4.5zm6-6h-12v-15H16V6h4.5v10.5z" fill="#a0a0a0"/></svg>
<svg class="abs" style="left:15.00px;top:128.00px" width="30" height="30" viewBox="0 0 24 24" ><path d="M15.25 0a8.25 8.25 0 0 0-6.18 13.72L1 22.88l1.12 1 8.05-9.12A8.251 8.251 0 1 0 15.25.01V0zm0 15a6.75 6.75 0 1 1 0-13.5 6.75 6.75 0 0 1 0 13.5z" fill="#a0a0a0"/></svg>
<svg class="abs" style="left:15.00px;top:188.00px" width="30" height="30" viewBox="0 0 24 24" ><path d="M21.007 8.222A3.738 3.738 0 0 0 15.045 5.2a3.737 3.737 0 0 0 1.156 6.583 2.988 2.988 0 0 1-2.668 1.67h-2.99a4.456 4.456 0 0 0-2.989 1.165V7.4a3.737 3.737 0 1 0-1.494 0v9.117a3.776 3.776 0 1 0 1.816.099 2.99 2.99 0 0 1 2.668-1.667h2.99a4.484 4.484 0 0 0 4.223-3.039 3.736 3.736 0 0 0 3.25-3.687zM4.565 3.738a2.242 2.242 0 1 1 4.484 0 2.242 2.242 0 0 1-4.484 0zm4.484 16.441a2.242 2.242 0 1 1-4.484 0 2.242 2.242 0 0 1 4.484 0zm8.221-9.715a2.242 2.242 0 1 1 0-4.485 2.242 2.242 0 0 1 0 4.485z" fill="#a0a0a0"/></svg>
<svg class="abs" style="left:15.00px;top:248.00px" width="30" height="30" viewBox="0 0 24 24" ><path d="M10.94 13.5l-1.32 1.32a3.73 3.73 0 0 0-7.24 0L1.06 13.5 0 14.56l1.72 1.72-.22.22V18H0v1.5h1.5v.08c.077.489.214.966.41 1.42L0 22.94 1.06 24l1.65-1.65A4.308 4.308 0 0 0 6 24a4.31 4.31 0 0 0 3.29-1.65L10.94 24 12 22.94 10.09 21c.198-.464.336-.951.41-1.45v-.1H12V18h-1.5v-1.5l-.22-.22L12 14.56l-1.06-1.06zM6 13.5a2.25 2.25 0 0 1 2.25 2.25h-4.5A2.25 2.25 0 0 1 6 13.5zm3 6a3.33 3.33 0 0 1-3 3 3.33 3.33 0 0 1-3-3v-2.25h6v2.25zm14.76-9.9v1.26L13.5 17.37V15.6l8.5-5.37L9 2v9.46a5.07 5.07 0 0 0-1.5-.72V.63L8.64 0l15.12 9.6z" fill="#a0a0a0"/></svg>
<svg class="abs" style="left:15.00px;top:308.00px" width="30" height="30" viewBox="0 0 24 24" ><path d="M13.5 1.5L15 0h7.5L24 1.5V9l-1.5 1.5H15L13.5 9V1.5zm1.5 0V9h7.5V1.5H15zM0 15V6l1.5-1.5H9L10.5 6v7.5H18l1.5 1.5v7.5L18 24H1.5L0 22.5V15zm9-1.5V6H1.5v7.5H9zM9 15H1.5v7.5H9V15zm1.5 7.5H18V15h-7.5v7.5z" fill="#a0a0a0"/></svg>
<svg class="abs" style="left:14.80px;top:368.00px" width="30" height="30" viewBox="0 0 30 30" ><circle cx="15" cy="15" r="14" fill="none" stroke="#a0a0a0" stroke-width="1.6"/><path d="M12 7.6V22.6M12.4 8L19.6 15.4" stroke="#a0a0a0" stroke-width="1.4" fill="none"/><circle cx="12" cy="7.6" r="2.7" fill="#a0a0a0"/><circle cx="12" cy="22.6" r="2.7" fill="#a0a0a0"/><circle cx="20" cy="15.6" r="2.7" fill="#a0a0a0"/></svg>
<svg class="abs" style="left:14.80px;top:427.60px" width="32" height="32" viewBox="0 0 32 32" ><path d="M19 28.9A14 14 0 1 1 29.4 14" fill="none" stroke="#a0a0a0" stroke-width="1.6"/><path d="M12 8V22M12.4 8.4L19 14.6" stroke="#a0a0a0" stroke-width="1.4" fill="none"/><circle cx="12" cy="8" r="2.7" fill="#a0a0a0"/><circle cx="12" cy="22" r="2.5" fill="#a0a0a0"/><circle cx="22.9" cy="22.9" r="5.6" fill="#5c5f60" stroke="#a0a0a0" stroke-width="2.6"/><path d="M27.2 27.4L29.6 30" stroke="#a0a0a0" stroke-width="2.6"/></svg>
<div class="abs" style="left:30.4px;top:203.2px;width:19.6px;height:19.6px;border-radius:10px;background:#0078d4;color:#fff;font-size:11.5px;font-weight:bold;line-height:19.6px;text-align:center">6</div>
<svg class="abs" style="left:14.00px;top:874.00px" width="32" height="32" viewBox="0 0 32 32" ><circle cx="16" cy="15.8" r="14" fill="none" stroke="#a0a0a0" stroke-width="1.9"/><circle cx="16" cy="13" r="6" fill="none" stroke="#a0a0a0" stroke-width="1.9"/><path d="M6.7 26.2C7.6 21.6 11.4 19.4 16 19.4S24.4 21.6 25.3 26.2" fill="none" stroke="#a0a0a0" stroke-width="1.9"/></svg>
<svg class="abs" style="left:13.00px;top:933.00px" width="34" height="34" viewBox="0 0 34 34" ><path d="M14.38 6.43L14.53 2.31L19.47 2.31L19.62 6.43L22.41 7.58L25.43 4.78L28.92 8.27L26.12 11.29L27.27 14.08L31.39 14.23L31.39 19.17L27.27 19.32L26.12 22.11L28.92 25.13L25.43 28.62L22.41 25.82L19.62 26.97L19.47 31.09L14.53 31.09L14.38 26.97L11.59 25.82L8.57 28.62L5.08 25.13L7.88 22.11L6.73 19.32L2.61 19.17L2.61 14.23L6.73 14.08L7.88 11.29L5.08 8.27L8.57 4.78L11.59 7.58Z" fill="none" stroke="#a0a0a0" stroke-width="2" stroke-linejoin="round"/><circle cx="17" cy="16.7" r="3.5" fill="none" stroke="#a0a0a0" stroke-width="2"/></svg>
<svg class="abs" style="left:74.10px;top:66.60px" width="17.6" height="15.3" viewBox="0 0 261.76 226.69" ><path d="M161.096.001l-30.225 52.351L100.647.001H-.005l130.877 226.688L261.749.001z" fill="#41b883"/><path d="M161.096.001l-30.225 52.351L100.647.001H52.346l78.526 136.01L209.398.001z" fill="#34495e"/></svg>
<svg class="abs" style="left:412.00px;top:102.60px" width="16.4" height="14.2" viewBox="0 0 261.76 226.69" ><path d="M161.096.001l-30.225 52.351L100.647.001H-.005l130.877 226.688L261.749.001z" fill="#41b883"/><path d="M161.096.001l-30.225 52.351L100.647.001H52.346l78.526 136.01L209.398.001z" fill="#34495e"/></svg>
<svg class="abs" style="left:194.00px;top:66.00px" width="16" height="16" viewBox="0 0 16 16" ><path d="M2.6 3.2L13.4 13.4M13.4 3.2L2.6 13.4" stroke="#d4d4d4" stroke-width="1.5" fill="none"/></svg>
<svg class="abs" style="left:1814.00px;top:62.00px" width="24" height="24" viewBox="0 0 24 24" ><circle cx="6.6" cy="6.2" r="2.5" fill="none" stroke="#cccccc" stroke-width="1.4"/><circle cx="18.2" cy="19" r="2.5" fill="none" stroke="#cccccc" stroke-width="1.4"/><path d="M6.6 8.8V15.8Q6.6 19 9.8 19H13.2M10.8 16.4L13.4 19L10.8 21.6" fill="none" stroke="#cccccc" stroke-width="1.4"/><path d="M18.2 16.4V9.4Q18.2 6.2 15 6.2H11.8M14.2 3.6L11.6 6.2L14.2 8.8" fill="none" stroke="#cccccc" stroke-width="1.4"/></svg>
<svg class="abs" style="left:1848.00px;top:62.00px" width="24" height="24" viewBox="0 0 24 24" ><rect x="4.4" y="4.2" width="14.6" height="14.6" rx="1.6" fill="none" stroke="#cccccc" stroke-width="1.6"/><path d="M11.7 4.2V18.8" stroke="#cccccc" stroke-width="1.5"/></svg>
<svg class="abs" style="left:1881.00px;top:68.00px" width="22" height="12" viewBox="0 0 22 12" ><circle cx="4.1" cy="6" r="1.45" fill="#ccc"/><circle cx="10.4" cy="6" r="1.45" fill="#ccc"/><circle cx="16.6" cy="6" r="1.45" fill="#ccc"/></svg>
<svg class="abs" style="left:104.60px;top:102.00px" width="12" height="16" viewBox="0 0 12 16" ><path d="M3 2.6L9 8.2L3 13.8" fill="none" stroke="#a0a0a0" stroke-width="1.3"/></svg>
<svg class="abs" style="left:163.50px;top:102.00px" width="12" height="16" viewBox="0 0 12 16" ><path d="M3 2.6L9 8.2L3 13.8" fill="none" stroke="#a0a0a0" stroke-width="1.3"/></svg>
<svg class="abs" style="left:394.80px;top:102.00px" width="12" height="16" viewBox="0 0 12 16" ><path d="M3 2.6L9 8.2L3 13.8" fill="none" stroke="#a0a0a0" stroke-width="1.3"/></svg>
<svg class="abs" style="left:510.30px;top:102.00px" width="12" height="16" viewBox="0 0 12 16" ><path d="M3 2.6L9 8.2L3 13.8" fill="none" stroke="#a0a0a0" stroke-width="1.3"/></svg>
<svg class="abs" style="left:568.20px;top:102.00px" width="12" height="16" viewBox="0 0 12 16" ><path d="M3 2.6L9 8.2L3 13.8" fill="none" stroke="#a0a0a0" stroke-width="1.3"/></svg>
<svg class="abs" style="left:692.20px;top:102.00px" width="12" height="16" viewBox="0 0 12 16" ><path d="M3 2.6L9 8.2L3 13.8" fill="none" stroke="#a0a0a0" stroke-width="1.3"/></svg>
<svg class="abs" style="left:775.20px;top:102.00px" width="12" height="16" viewBox="0 0 12 16" ><path d="M3 2.6L9 8.2L3 13.8" fill="none" stroke="#a0a0a0" stroke-width="1.3"/></svg>
<span class="abs" style="left:585.3px;top:98px;font-size:16px;line-height:22px;color:#d0d0d0;letter-spacing:4.4px;font-family:'Liberation Sans',sans-serif">{}</span>
<svg class="abs" style="left:707.00px;top:99.40px" width="21" height="21" viewBox="0 0 21 21" ><path d="M11.4 2.6L19 5.8V12.6L9.4 17L2 13.6V6.6Z M2.2 6.8L9.4 10.2L18.8 6M9.4 10.2V16.8" fill="none" stroke="#75beff" stroke-width="1.4" stroke-linejoin="round"/></svg>
<svg class="abs" style="left:790.00px;top:101.00px" width="20" height="18" viewBox="0 0 20 18" ><path d="M4.8 3H2.2V14.6H4.8M15.2 3H17.8V14.6H15.2" fill="none" stroke="#75beff" stroke-width="1.4"/><path d="M6.2 8.2L11.4 5.6L14 7.2V10L8.8 12.6L6.2 11Z M6.4 8.4L8.8 9.8V12.4M8.8 9.8L13.8 7.4" fill="none" stroke="#75beff" stroke-width="1.2" stroke-linejoin="round"/></svg>
<svg class="abs" style="left:13.00px;top:983.00px" width="18" height="20" viewBox="0 0 18 20" ><path d="M3.2 6.8L8.4 11.6L3.2 16.4M14.6 3.4L9.4 8.2L14.6 13" fill="none" stroke="#fff" stroke-width="1.5"/></svg>
<svg class="abs" style="left:49.80px;top:982.00px" width="18" height="22" viewBox="0 0 18 22" ><circle cx="5" cy="4.6" r="2.3" fill="none" stroke="#cccccc" stroke-width="1.4"/><circle cx="5" cy="17.2" r="2.3" fill="none" stroke="#cccccc" stroke-width="1.4"/><circle cx="13.4" cy="7.2" r="2.3" fill="none" stroke="#cccccc" stroke-width="1.4"/><path d="M5 7V14.8M13.4 9.6Q13.4 12.4 9.6 12.4Q5.4 12.6 5 14.8" fill="none" stroke="#cccccc" stroke-width="1.4"/></svg>
<svg class="abs" style="left:130.00px;top:984.00px" width="20" height="20" viewBox="0 0 20 20" ><path d="M3.5 8A6.2 6.2 0 0 1 15.4 7.4M15.7 10.2A6.2 6.2 0 0 1 3.8 10.8" fill="none" stroke="#cccccc" stroke-width="1.4"/><path d="M12.6 7.2L15.8 8L17 4.8M6.6 11L3.4 10.2L2.2 13.4" fill="none" stroke="#cccccc" stroke-width="1.4"/></svg>
<svg class="abs" style="left:164.00px;top:983.00px" width="20" height="22" viewBox="0 0 20 22" ><circle cx="5.6" cy="4.9" r="2" fill="none" stroke="#cccccc" stroke-width="1.3"/><circle cx="5.6" cy="15" r="2" fill="none" stroke="#cccccc" stroke-width="1.3"/><circle cx="14.7" cy="10.1" r="2" fill="none" stroke="#cccccc" stroke-width="1.3"/><path d="M5.6 7V13M10.4 2V18M10.4 14Q14.7 14 14.7 12.2" fill="none" stroke="#cccccc" stroke-width="1.3"/></svg>
<svg class="abs" style="left:202.00px;top:983.40px" width="20" height="20" viewBox="0 0 20 20" ><path d="M17.8 2.2C12.4 2.4 8.6 5.2 6.2 10.4L9.6 13.8C14.8 11.4 17.6 7.6 17.8 2.2ZM6.6 9.6L2.6 9.6V12.4M10.4 13.4V17.4H7.6M4.4 13.2L2.6 17.4L6.8 15.6" fill="none" stroke="#cccccc" stroke-width="1.3" stroke-linejoin="round"/><circle cx="12.6" cy="7.4" r="1.5" fill="#cccccc"/></svg>
<svg class="abs" style="left:221.00px;top:983.40px" width="18" height="20" viewBox="0 0 18 20" ><g transform="rotate(-45 9 10)" fill="none" stroke="#cccccc" stroke-width="1.3"><path d="M-1.6 10H2.4M8.4 8.4H10.4M8.4 11.6H10.4M15 10H18"/><rect x="2.4" y="7.3" width="6" height="5.4" rx="2.6"/><rect x="10.4" y="6.8" width="4.6" height="6.4" rx="1.4"/></g></svg>
<svg class="abs" style="left:334.00px;top:983.40px" width="20" height="20" viewBox="0 0 20 20" ><circle cx="9.6" cy="10" r="7.6" fill="none" stroke="#cccccc" stroke-width="1.4"/><path d="M6.4 6.8L12.8 13.2M12.8 6.8L6.4 13.2" stroke="#cccccc" stroke-width="1.4"/></svg>
<svg class="abs" style="left:369.00px;top:983.40px" width="18" height="20" viewBox="0 0 18 20" ><path d="M8.6 3L15.8 16.8H1.4Z" fill="none" stroke="#cccccc" stroke-width="1.4" stroke-linejoin="round"/><path d="M8.6 8V12.6M8.6 13.8V15.4" stroke="#cccccc" stroke-width="1.4"/></svg>
<svg class="abs" style="left:419.00px;top:983.40px" width="18" height="20" viewBox="0 0 18 20" ><path d="M4.6 3.4A6.6 6.6 0 0 0 4.6 12.6M13.4 3.4A6.6 6.6 0 0 1 13.4 12.6M6.6 5.4A3.8 3.8 0 0 0 6.6 10.6M11.4 5.4A3.8 3.8 0 0 1 11.4 10.6" fill="none" stroke="#cccccc" stroke-width="1.3"/><circle cx="9" cy="8" r="1.6" fill="#cccccc"/><path d="M9 9L5.4 18M9 9L12.6 18M6.6 15H11.4" fill="none" stroke="#cccccc" stroke-width="1.3"/></svg>
<svg class="abs" style="left:1404.00px;top:984.00px" width="20" height="20" viewBox="0 0 20 20" ><circle cx="9" cy="8.6" r="6" fill="none" stroke="#cccccc" stroke-width="1.4"/><path d="M13.4 13L18.2 17.8M6 8.6H12" stroke="#cccccc" stroke-width="1.4" fill="none"/></svg>
<span class="abs" style="left:1727.2px;top:981.6px;font-size:14.6px;line-height:20px;color:#ccc;letter-spacing:5px">{}</span>
<svg class="abs" style="left:1734.20px;top:991.70px" width="10" height="10" viewBox="0 0 10 10" ><circle cx="5" cy="5" r="4.1" fill="#cccccc" stroke="#1c1c1c" stroke-width="1"/><path d="M3.4 3.4L6.6 6.6M6.6 3.4L3.4 6.6" stroke="#1c1c1c" stroke-width="1"/></svg>
<svg class="abs" style="left:1793.90px;top:983.60px" width="17" height="20" viewBox="0 0 17 20" ><circle cx="8.4" cy="8.4" r="6.6" fill="none" stroke="#cccccc" stroke-width="1.5"/><circle cx="8.4" cy="8.4" r="3.5" fill="none" stroke="#cccccc" stroke-width="1.4"/><circle cx="8.4" cy="8.4" r="1.3" fill="#cccccc"/><path d="M8.4 10V19" stroke="#cccccc" stroke-width="2.4"/></svg>
<svg class="abs" style="left:1884.60px;top:983.40px" width="20" height="20" viewBox="0 0 20 20" ><path d="M3 14.4H15.6L14 11.8V8A4.8 4.8 0 0 0 4.6 8V11.8ZM7.4 16.4A2 2 0 0 0 11.2 16.4" fill="none" stroke="#cccccc" stroke-width="1.4" stroke-linejoin="round"/><circle cx="12.8" cy="5.4" r="3.5" fill="#cccccc" stroke="#1c1c1c" stroke-width="1"/></svg>
</body>
</html>
